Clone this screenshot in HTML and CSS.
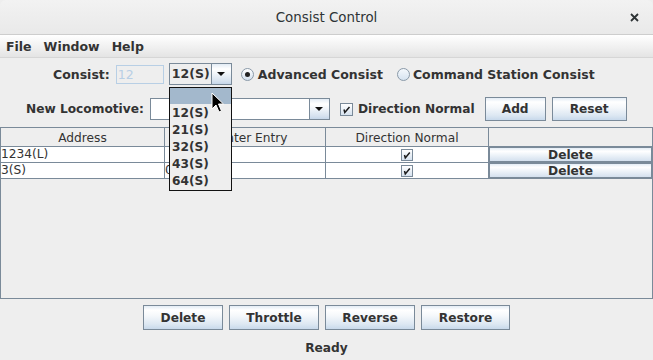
FILE: index.html
```html
<!DOCTYPE html>
<html>
<head>
<meta charset="utf-8">
<link rel="stylesheet" href="styles.css">
</head>
<body>
<div class="window">
  <div class="titlebar">
    <span></span>
    <span class="title">Consist Control</span>
    <svg class="close" width="9" height="9" viewBox="0 0 9 9"><path d="M1 1 L8 8 M8 1 L1 8" stroke="#2e3436" stroke-width="1.8" fill="none"/></svg>
  </div>
  <div class="menubar">
    <span class="menu">File</span><span class="menu">Window</span><span class="menu">Help</span>
  </div>

  <div class="row row1">
    <span class="label">Consist:</span>
    <span class="tfield">12</span>
    <span class="combo combo-consist">
      <span class="combo-text">12(S)</span>
      <span class="arrow"><svg width="8" height="4" viewBox="0 0 8 4"><polygon points="0,0 8,0 4,4" fill="#111"/></svg></span>
    </span>
    <span class="radio on"><span class="dot"></span></span><span class="rtext">Advanced Consist</span>
    <span class="radio second"></span><span class="rtext rtext2">Command Station Consist</span>
  </div>

  <div class="row row2">
    <span class="label">New Locomotive:</span>
    <span class="combo combo-loco">
      <span class="combo-edit"></span>
      <span class="arrow"><svg width="8" height="4" viewBox="0 0 8 4"><polygon points="0,0 8,0 4,4" fill="#111"/></svg></span>
    </span>
    <span class="check"><svg width="11" height="11" viewBox="0 0 11 11"><path d="M3 5.5 L3.8 8.5 L8.5 3" stroke="#1a1a1a" stroke-width="1.5" fill="none"/></svg></span>
    <span class="label ctext">Direction Normal</span>
    <span class="btn btn-add">Add</span>
    <span class="btn btn-reset">Reset</span>
  </div>

  <div class="table">
    <div class="trow thead">
      <span class="hcell">Address</span>
      <span class="hcell">Counter Entry</span>
      <span class="hcell">Direction Normal</span>
      <span class="hcell last"></span>
    </div>
    <div class="trow">
      <span class="cell">1234(L)</span>
      <span class="cell"></span>
      <span class="cell center"><span class="check small"><svg width="10" height="10" viewBox="0 0 10 10"><path d="M2.5 5 L3.3 8 L7.8 2.6" stroke="#1a1a1a" stroke-width="1.5" fill="none"/></svg></span></span>
      <span class="cell last"><span class="cellbtn">Delete</span></span>
    </div>
    <div class="trow">
      <span class="cell">3(S)</span>
      <span class="cell">0</span>
      <span class="cell center"><span class="check small"><svg width="10" height="10" viewBox="0 0 10 10"><path d="M2.5 5 L3.3 8 L7.8 2.6" stroke="#1a1a1a" stroke-width="1.5" fill="none"/></svg></span></span>
      <span class="cell last"><span class="cellbtn">Delete</span></span>
    </div>
  </div>

  <div class="buttons">
    <span class="btn b-delete">Delete</span>
    <span class="btn b-throttle">Throttle</span>
    <span class="btn b-reverse">Reverse</span>
    <span class="btn b-restore">Restore</span>
  </div>
  <div class="status">Ready</div>

  <div class="popup">
    <div class="pitem sel"></div>
    <div class="pitem">12(S)</div>
    <div class="pitem">21(S)</div>
    <div class="pitem">32(S)</div>
    <div class="pitem">43(S)</div>
    <div class="pitem">64(S)</div>
  </div>
  <svg class="cursor" width="14" height="22" viewBox="0 0 14 22"><path d="M1 1 L1 17 L5 13 L8 20 L10.5 19 L7.5 12 L12.5 12 Z" fill="#000" stroke="#fff" stroke-width="1"/></svg>
</div>
</body>
</html>
```

FILE: styles.css
```css
html, body {
  margin: 0;
  padding: 0;
  background: #eeeeee;
}
body {
  font-family: "DejaVu Sans", sans-serif;
  font-size: 12.2px;
  color: #333333;
}
.window {
  position: relative;
  width: 653px;
  height: 360px;
  overflow: hidden;
  background: #eeeeee;
}
.titlebar {
  height: 34px;
  border-bottom: 1px solid #cdcdcd;
  background: linear-gradient(#f2f2f2, #e9e9e9);
  border-radius: 6px 6px 0 0;
  display: grid;
  grid-template-columns: 1fr auto 1fr;
  align-items: center;
}
.title {
  font-size: 13.4px;
  color: #2e3436;
  padding-top: 1px;
}
.close {
  justify-self: end;
  margin-right: 14px;
  margin-top: 1px;
}
.menubar {
  height: 22px;
  border-bottom: 1px solid #d6d6d6;
  background: linear-gradient(#ffffff, #e4e4e4);
  display: flex;
  align-items: center;
  font-weight: bold;
  font-size: 12.5px;
}
.menu {
  padding: 0 6px;
}
.row {
  display: flex;
  align-items: center;
}
.row1 {
  height: 22px;
  margin-top: 5px;
  padding-left: 53px;
  font-size: 12.5px;
}
.row2 {
  height: 24px;
  margin-top: 12px;
  padding-left: 26px;
}
.label {
  font-weight: bold;
  white-space: nowrap;
}
.tfield {
  box-sizing: border-box;
  width: 48px;
  height: 19px;
  margin-left: 6px;
  border: 1px solid #b8cfe5;
  color: #b8cfe5;
  padding-left: 1px;
  line-height: 17px;
}
.combo {
  box-sizing: border-box;
  height: 22px;
  border: 1px solid #7a8a99;
  display: flex;
}
.combo-consist {
  width: 63px;
  margin-left: 5px;
}
.combo-text {
  flex: 1;
  font-weight: bold;
  padding-left: 2px;
  line-height: 20px;
  background: #eeeeee;
}
.combo-loco {
  width: 180px;
  margin-left: 6px;
}
.combo-edit {
  flex: 1;
  background: #ffffff;
}
.arrow {
  width: 19px;
  border-left: 1px solid #7a8a99;
  background: linear-gradient(#e3ecf5 0%, #ffffff 25%, #f3f7fb 45%, #d6e2ef 85%, #c6d7ea 100%);
  display: flex;
  align-items: center;
  justify-content: center;
}
.radio {
  box-sizing: border-box;
  width: 13px;
  height: 13px;
  border-radius: 50%;
  border: 1px solid #8a9aa9;
  background: linear-gradient(#ffffff, #d3e0ee);
  margin-left: 9px;
  display: flex;
  align-items: center;
  justify-content: center;
}
.radio.second {
  margin-left: 14px;
  background: linear-gradient(#f4f8fc, #d6e3f0);
}
.dot {
  width: 5px;
  height: 5px;
  border-radius: 50%;
  background: #222222;
}
.rtext {
  font-weight: bold;
  margin-left: 4px;
  white-space: nowrap;
}
.rtext2 {
  margin-left: 3px;
}
.check {
  box-sizing: border-box;
  width: 13px;
  height: 13px;
  border: 1px solid #7a8a99;
  background: linear-gradient(#ffffff, #d6e2ef);
  margin-left: 10px;
  display: flex;
  align-items: center;
  justify-content: center;
}
.check.small {
  width: 12px;
  height: 12px;
  margin-left: 0;
}
.ctext {
  margin-left: 5px;
}
.btn {
  box-sizing: border-box;
  border: 1px solid #7a8a99;
  background: linear-gradient(#e3ecf5 0%, #ffffff 18%, #f5f8fb 42%, #dce7f2 80%, #c8d9eb 100%);
  font-weight: bold;
  display: flex;
  align-items: center;
  justify-content: center;
  height: 24px;
}
.btn-add {
  width: 61px;
  margin-left: 10px;
}
.btn-reset {
  width: 75px;
  margin-left: 6px;
}
.table {
  box-sizing: border-box;
  margin-top: 6px;
  width: 653px;
  height: 172px;
  border: 1px solid #7a8a99;
  background: #eeeeee;
}
.trow {
  display: grid;
  grid-template-columns: 164px 161px 163px 1fr;
  height: 16px;
}
.thead {
  height: 19px;
}
.hcell {
  box-sizing: border-box;
  border-right: 1px solid #7a8a99;
  border-bottom: 1px solid #7a8a99;
  text-align: center;
  line-height: 18px;
  padding-top: 1px;
  background: #eeeeee;
  white-space: nowrap;
  overflow: hidden;
}
.cell {
  box-sizing: border-box;
  border-right: 1px solid #7a8a99;
  border-bottom: 1px solid #7a8a99;
  background: #ffffff;
  line-height: 15px;
  white-space: nowrap;
  overflow: hidden;
}
.hcell.last, .cell.last {
  border-right: none;
}
.cell.center {
  display: flex;
  align-items: center;
  justify-content: center;
}
.cellbtn {
  box-sizing: border-box;
  display: block;
  height: 15px;
  border: 1px solid #7a8a99;
  background: linear-gradient(#e3ecf5 0%, #ffffff 25%, #f0f5fa 50%, #d3e0ee 100%);
  font-weight: bold;
  text-align: center;
  line-height: 14px;
}
.buttons {
  display: flex;
  justify-content: center;
  gap: 6px;
  margin-top: 6px;
}
.buttons .btn {
  height: 25px;
}
.b-delete { width: 80px; }
.b-throttle { width: 90px; }
.b-reverse { width: 90px; }
.b-restore { width: 89px; }
.status {
  margin-top: 10px;
  text-align: center;
  font-weight: bold;
  line-height: 16px;
}
.popup {
  position: absolute;
  left: 169px;
  top: 87px;
  box-sizing: border-box;
  width: 63px;
  height: 104px;
  border: 1px solid #111111;
  background: #eeeeee;
}
.pitem {
  height: 17px;
  line-height: 19px;
  padding-left: 2px;
  font-weight: bold;
}
.pitem.sel {
  height: 16px;
  background: #a3b8cc;
}
.cursor {
  position: absolute;
  left: 211px;
  top: 92px;
}
```
